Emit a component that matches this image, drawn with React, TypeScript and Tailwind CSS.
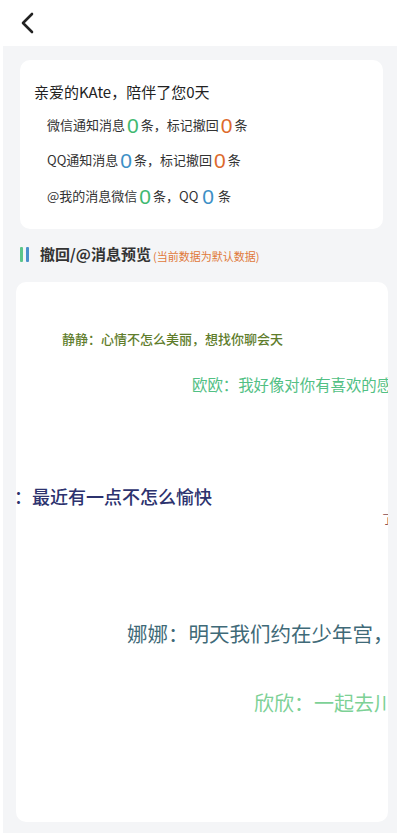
import React from "react";

const font = { fontFamily: '"Noto Sans CJK SC", "Noto Sans", sans-serif' };
const num = { fontFamily: '"Liberation Sans", Arial, sans-serif' };

type Danmu = {
  text: string;
  left: number;
  top: number;
  cls: string;
};

// 弹幕预览（画布上的自由位置）
const danmus: Danmu[] = [
  { text: "静静：心情不怎么美丽，想找你聊会天", left: 46, top: 50, cls: "text-[13px] text-[#5f7d2c] font-medium" },
  { text: "欧欧：我好像对你有喜欢的感觉", left: 176, top: 95, cls: "text-[15.4px] text-[#52c084]" },
  { text: "落落：最近有一点不怎么愉快", left: -38, top: 205, cls: "text-[18px] text-[#2c326e] font-medium" },
  { text: "了解一下吧", left: 366, top: 231, cls: "text-[12px] text-[#8a4a4a]" },
  { text: "娜娜：明天我们约在少年宫，", left: 111, top: 341, cls: "text-[20.5px] text-[#3f6a78]" },
  { text: "欣欣：一起去川菜馆吧", left: 238, top: 411, cls: "text-[20px] text-[#7dd196]" },
];

export default function App() {
  return (
    <div className="w-[400px] h-[836px] bg-white overflow-hidden" style={font}>
      {/* 顶部导航 */}
      <div className="h-[46px] flex items-center pl-[20px]">
        <svg width="16" height="22" viewBox="0 0 16 22" fill="none">
          <path d="M12 2 L3 11 L12 20" stroke="#222" strokeWidth="2.6" strokeLinecap="round" strokeLinejoin="round" />
        </svg>
      </div>

      <div className="mx-[3px] h-[787px] bg-[#f4f5f7] pt-[14px] flex flex-col">
        {/* 统计卡片 */}
        <div className="ml-[17px] mr-[14px] h-[169px] bg-white rounded-[10px] pt-[21px] pl-[14px]">
          <div className="text-[15px] leading-[22px] text-[#222]">亲爱的KAte，陪伴了您0天</div>
          <div className="pl-[13px] mt-[9px] flex flex-col gap-[9px] text-[13px] text-[#333]">
            <div className="flex items-center h-[26px]">
              微信通知消息<span className="text-[21px] text-[#3fb971] mx-[2px] leading-none" style={num}>0</span>条，标记撤回
              <span className="text-[21px] text-[#dd6a2c] mx-[2px] leading-none" style={num}>0</span>条
            </div>
            <div className="flex items-center h-[26px]">
              QQ通知消息<span className="text-[21px] text-[#3d8fc6] mx-[2px] leading-none" style={num}>0</span>条，标记撤回
              <span className="text-[21px] text-[#dd6a2c] mx-[2px] leading-none" style={num}>0</span>条
            </div>
            <div className="flex items-center h-[26px] mt-[1px]">
              @我的消息微信<span className="text-[21px] text-[#3fb971] mx-[2px] leading-none" style={num}>0</span>条，QQ
              <span className="text-[21px] text-[#3d8fc6] mx-[4px] leading-none" style={num}>0</span>条
            </div>
          </div>
        </div>

        {/* 标题 */}
        <div className="h-[53px] flex items-center pl-[17px] pb-[2px]">
          <span className="w-[3px] h-[15px] bg-[#5cc58a] rounded-[1px]" />
          <span className="w-[3px] h-[15px] bg-[#4a8fcb] rounded-[1px] ml-[3px]" />
          <span className="ml-[11px] text-[15px] font-bold text-[#333]">撤回/@消息预览</span>
          <span className="ml-[2px] mt-[3px] text-[11px] text-[#e0793a]">(当前数据为默认数据)</span>
        </div>

        {/* 预览画布 */}
        <div className="relative ml-[13px] mr-[9px] h-[540px] bg-white rounded-[10px] overflow-hidden">
          {danmus.map((d, i) => (
            <div
              key={i}
              className={`absolute whitespace-nowrap leading-none ${d.cls}`}
              style={{ left: d.left, top: d.top }}
            >
              {d.text}
            </div>
          ))}
        </div>
      </div>
    </div>
  );
}
